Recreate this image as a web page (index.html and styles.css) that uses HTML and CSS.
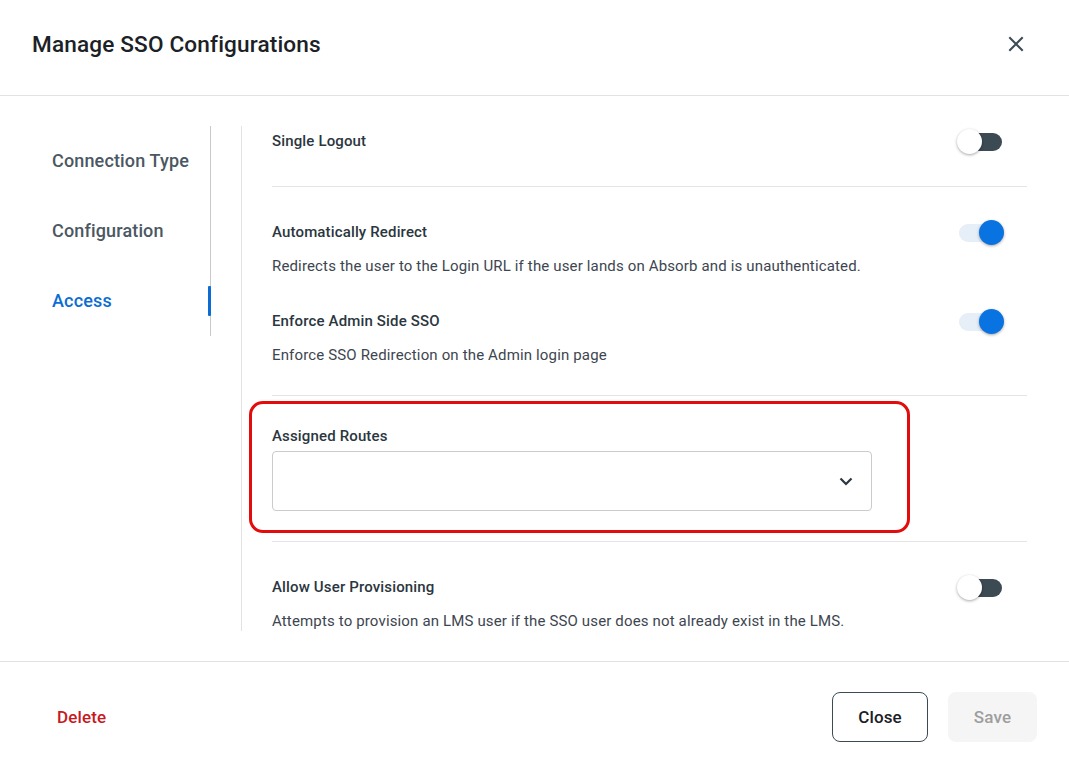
FILE: index.html
```html
<!DOCTYPE html>
<html>
<head>
	<meta charset="UTF-8">
	<title>Manage SSO Configurations</title>
	<link rel="stylesheet" href="styles.css">
</head>
<body>
	<div class="modal">
		<div class="modal-header">
			<h1 class="modal-title">Manage SSO Configurations</h1>
			<button class="close-x" aria-label="Close">
				<svg width="16" height="16" viewBox="0 0 16 16"><path d="M2 2 L14 14 M14 2 L2 14" stroke="#3c4a54" stroke-width="2" stroke-linecap="square" fill="none"/></svg>
			</button>
		</div>

		<div class="modal-body">
			<ul class="side-nav">
				<li class="nav-item">Connection Type</li>
				<li class="nav-item">Configuration</li>
				<li class="nav-item active">Access</li>
			</ul>

			<div class="content">
				<div class="section first">
					<div class="setting">
						<div class="setting-head">
							<span class="setting-label">Single Logout</span>
							<span class="toggle"><span class="track"></span><span class="knob"></span></span>
						</div>
					</div>
				</div>

				<div class="section">
					<div class="setting">
						<div class="setting-head">
							<span class="setting-label">Automatically Redirect</span>
							<span class="toggle on"><span class="track"></span><span class="knob"></span></span>
						</div>
						<div class="setting-desc">Redirects the user to the Login URL if the user lands on Absorb and is unauthenticated.</div>
					</div>
					<div class="setting">
						<div class="setting-head">
							<span class="setting-label">Enforce Admin Side SSO</span>
							<span class="toggle on"><span class="track"></span><span class="knob"></span></span>
						</div>
						<div class="setting-desc">Enforce SSO Redirection on the Admin login page</div>
					</div>
				</div>

				<div class="section routes">
					<div class="highlight">
						<div class="field-label">Assigned Routes</div>
						<div class="select">
							<svg width="14" height="9" viewBox="0 0 14 9"><path d="M1.5 1.5 L7 7 L12.5 1.5" stroke="#2b3640" stroke-width="2.2" fill="none"/></svg>
						</div>
					</div>
				</div>

				<div class="section">
					<div class="setting">
						<div class="setting-head">
							<span class="setting-label">Allow User Provisioning</span>
							<span class="toggle"><span class="track"></span><span class="knob"></span></span>
						</div>
						<div class="setting-desc">Attempts to provision an LMS user if the SSO user does not already exist in the LMS.</div>
					</div>
				</div>
			</div>
		</div>

		<div class="modal-footer">
			<button class="btn-delete">Delete</button>
			<div class="footer-actions">
				<button class="btn btn-close">Close</button>
				<button class="btn btn-save">Save</button>
			</div>
		</div>
	</div>
</body>
</html>
```

FILE: styles.css
```css
body{
	margin: 0;
	background: #ffffff;
	font-family: Roboto, "Liberation Sans", sans-serif;
	letter-spacing: 0.15px;
	color: #2b3640;
}
button{
	font-family: inherit;
	letter-spacing: inherit;
	cursor: pointer;
}
.modal{
	width: 1069px;
	height: 764px;
	overflow: hidden;
}

/* header */
.modal-header{
	height: 88px;
	padding: 0 32px 7px 32px;
	border-bottom: 1px solid #e2e2e2;
	display: flex;
	align-items: center;
	justify-content: space-between;
}
.modal-title{
	margin: 0;
	font-size: 22.6px;
	font-weight: 500;
	color: #1c2126;
}
.close-x{
	background: none;
	border: 0;
	padding: 0;
	width: 16px;
	height: 16px;
	margin-right: 13px;
	display: flex;
}

/* body */
.modal-body{
	height: 505px;
	padding: 30px 0;
	border-bottom: 1px solid #e2e2e2;
	display: flex;
	align-items: flex-start;
}
.side-nav{
	list-style: none;
	margin: 0 30px 0 0;
	padding: 0;
	width: 210px;
	border-right: 1px solid #c9c9c9;
}
.nav-item{
	position: relative;
	height: 70px;
	line-height: 70px;
	padding-left: 52px;
	font-size: 18px;
	font-weight: 500;
	color: #4b5763;
}
.nav-item.active{
	color: #0b6dd3;
}
.nav-item.active::after{
	content: "";
	position: absolute;
	right: -1px;
	top: 20px;
	width: 3px;
	height: 30px;
	background: #0b6dd3;
	border-radius: 1px;
}
.content{
	flex: 1;
	height: 505px;
	overflow: hidden;
	border-left: 1px solid #e2e2e2;
	padding-left: 30px;
	margin-right: 42px;
}

.section{
	padding: 33px 0 29px;
	border-bottom: 1px solid #e4e4e4;
}
.section.first{
	padding: 3px 0 33px;
}
.setting + .setting{
	margin-top: 32px;
}
.setting-head{
	display: flex;
	align-items: center;
	justify-content: space-between;
	height: 24px;
	padding-right: 23px;
}
.setting-label{
	font-size: 15px;
	font-weight: 500;
	color: #2b3640;
}
.setting-desc{
	margin-top: 11px;
	font-size: 15px;
	line-height: 22px;
	color: #3d4650;
}

/* toggle */
.toggle{
	position: relative;
	width: 47px;
	height: 25px;
}
.toggle .track{
	position: absolute;
	left: 1px;
	right: 2px;
	top: 4px;
	height: 18px;
	border-radius: 9px;
	background: #3c4a54;
}
.toggle .knob{
	position: absolute;
	left: 0;
	top: 0;
	width: 25px;
	height: 25px;
	border-radius: 50%;
	background: #ffffff;
	box-shadow: 0 1px 3px rgba(0,0,0,0.35);
}
.toggle.on .track{
	left: 2px;
	background: #e6eef8;
}
.toggle.on .knob{
	left: 22px;
	background: #0a73e2;
}

/* assigned routes */
.section.routes{
	padding: 5px 0 0;
}
.highlight{
	display: inline-block;
	margin: 0 0 8px -23px;
	padding: 20px 35px 19px 20px;
	border: 3px solid #e30b0b;
	border-radius: 14px;
}
.field-label{
	font-size: 15px;
	font-weight: 500;
	line-height: 24px;
	color: #2b3640;
	margin-bottom: 3px;
}
.select{
	box-sizing: border-box;
	width: 600px;
	height: 60px;
	border: 1px solid #cbcbcb;
	border-radius: 4px;
	display: flex;
	align-items: center;
	justify-content: flex-end;
	padding-right: 18px;
}

/* footer */
.modal-footer{
	display: flex;
	align-items: center;
	justify-content: space-between;
	padding: 30px 32px 0 32px;
}
.btn-delete{
	background: none;
	border: 0;
	padding: 0 25px;
	height: 50px;
	font-size: 17px;
	font-weight: 500;
	color: #c8191f;
}
.footer-actions{
	display: flex;
	gap: 20px;
}
.btn{
	height: 50px;
	border-radius: 8px;
	font-size: 17px;
	font-weight: 500;
}
.btn-close{
	width: 96px;
	background: #ffffff;
	border: 1.5px solid #3c4a54;
	color: #1c2126;
}
.btn-save{
	width: 89px;
	background: #f5f5f5;
	border: 0;
	color: #9e9e9e;
}
```
